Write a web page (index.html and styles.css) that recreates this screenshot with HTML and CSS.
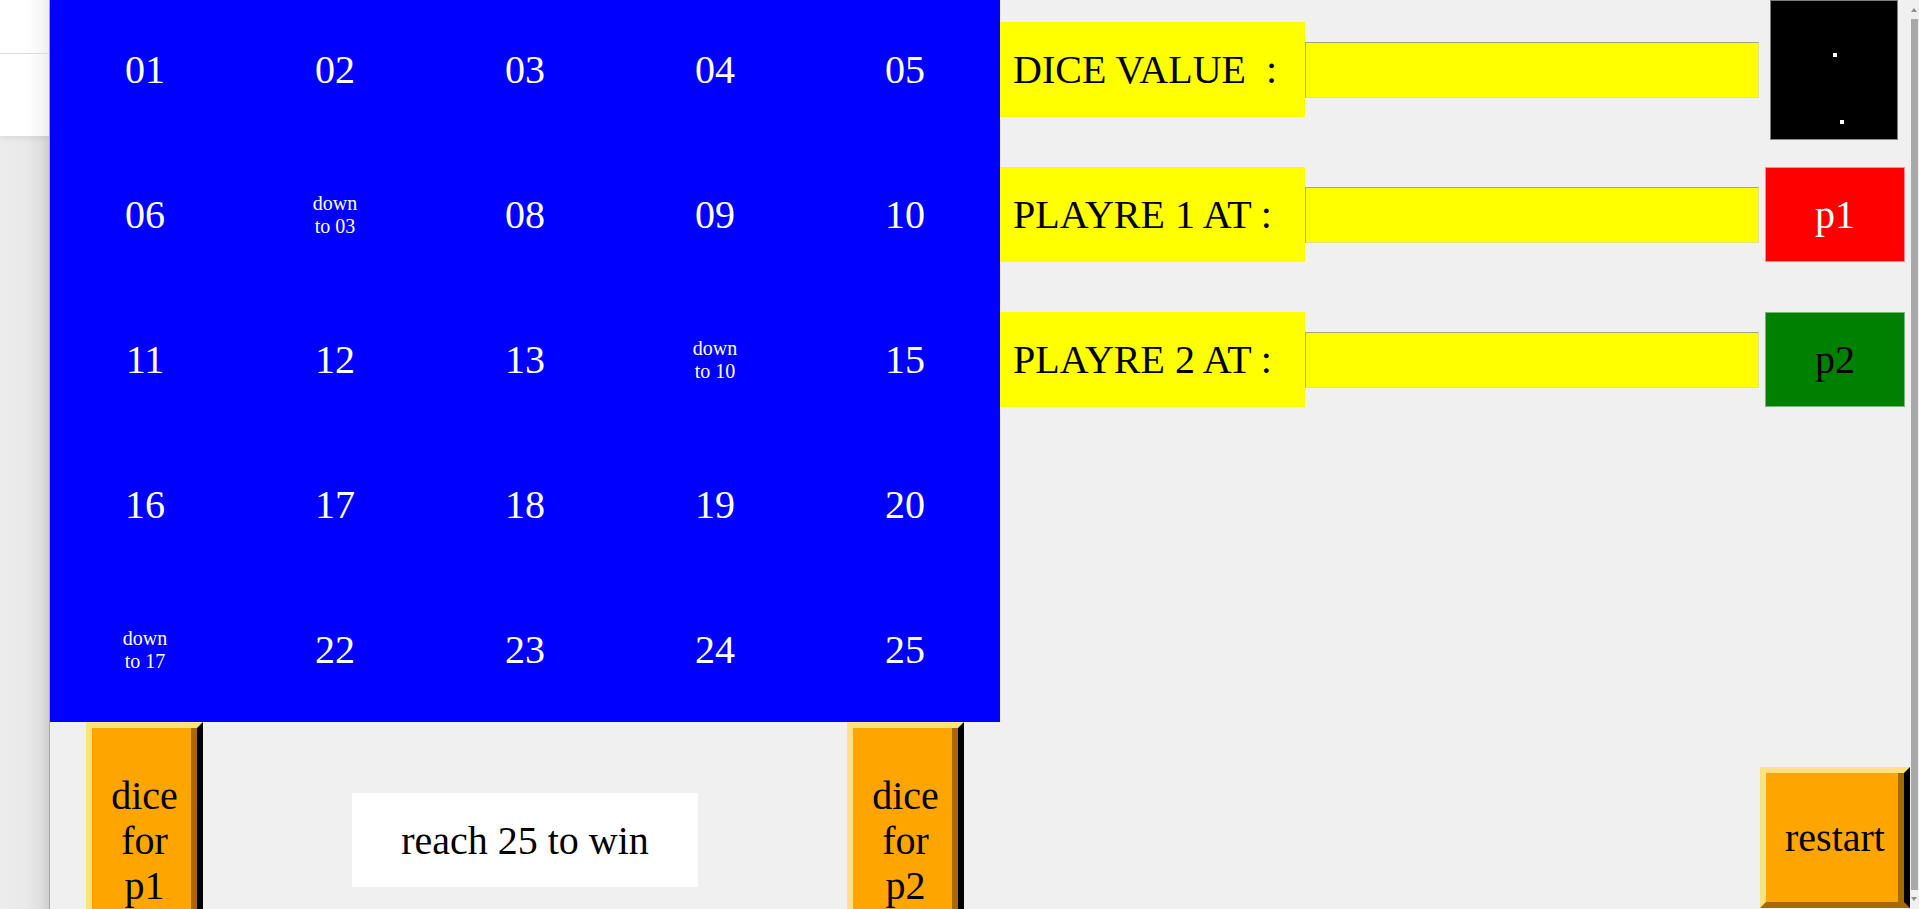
FILE: index.html
```html
<!DOCTYPE html>
<html lang="en">
<head>
<meta charset="utf-8">
<title>Snakes dice game</title>
<link rel="stylesheet" href="styles.css">
</head>
<body>
<div class="app">
  <div class="strip">
    <div class="strip-top"><div class="strip-line"></div></div>
  </div>
  <div class="page">
    <div class="top">
      <div class="board">
        <div class="cell">01</div><div class="cell">02</div><div class="cell">03</div><div class="cell">04</div><div class="cell">05</div>
        <div class="cell">06</div><div class="cell small">down<br>to 03</div><div class="cell">08</div><div class="cell">09</div><div class="cell">10</div>
        <div class="cell">11</div><div class="cell">12</div><div class="cell">13</div><div class="cell small">down<br>to 10</div><div class="cell">15</div>
        <div class="cell">16</div><div class="cell">17</div><div class="cell">18</div><div class="cell">19</div><div class="cell">20</div>
        <div class="cell small">down<br>to 17</div><div class="cell">22</div><div class="cell">23</div><div class="cell">24</div><div class="cell">25</div>
      </div>
      <div class="panel">
        <div class="label">DICE VALUE&nbsp; :</div>
        <input class="field" type="text">
        <div class="side">
          <div class="dice">
            <div class="pip pip1"></div>
            <div class="pip pip2"></div>
          </div>
        </div>
        <div class="label">PLAYRE 1 AT :</div>
        <input class="field" type="text">
        <div class="side"><div class="token token-p1">p1</div></div>
        <div class="label">PLAYRE 2 AT :</div>
        <input class="field" type="text">
        <div class="side"><div class="token token-p2">p2</div></div>
      </div>
    </div>
    <div class="bottom">
      <div class="bottom-left">
        <button class="btn btn-dice" type="button">dice for p1</button>
        <div class="goal">reach 25 to win</div>
        <button class="btn btn-dice" type="button">dice for p2</button>
      </div>
      <div class="bottom-right">
        <button class="btn btn-restart" type="button">restart</button>
      </div>
    </div>
  </div>
  <div class="scrollbar">
    <div class="arrow arrow-up"></div>
    <div class="thumb"></div>
    <div class="arrow arrow-down"></div>
  </div>
</div>
</body>
</html>
```

FILE: styles.css
```css
html, body {
  margin: 0;
  padding: 0;
  overflow: hidden;
  background: #f0f0f0;
}

body {
  font-family: "Liberation Serif", "Times New Roman", serif;
}

.app {
  display: flex;
  width: 1919px;
  height: 909px;
  overflow: hidden;
}

/* left host strip */
.strip {
  width: 49px;
  flex: none;
  border-right: 1px solid #a9a9a9;
  background: linear-gradient(to right, #ececec 0%, #e9e9e9 55%, #dddddd 85%, #cdcdcd 100%);
}

.strip-top {
  height: 136px;
  background: linear-gradient(to right, #ffffff 0%, #ffffff 55%, #f6f6f6 85%, #ececec 100%);
  box-shadow: 0 2px 6px rgba(0, 0, 0, 0.08);
}

.strip-line {
  height: 53px;
  border-bottom: 1px solid #dcdcdc;
}

/* page */
.page {
  width: 1860px;
  flex: none;
  overflow: hidden;
  background: #f0f0f0;
}

.top {
  display: flex;
  margin-top: -3px;
}

.board {
  width: 950px;
  flex: none;
  display: grid;
  grid-template-columns: repeat(5, 190px);
  grid-template-rows: repeat(5, 145px);
  background: #0000ff;
}

.cell {
  display: flex;
  align-items: center;
  justify-content: center;
  text-align: center;
  color: #ffffff;
  font-size: 40px;
}

.cell.small {
  font-size: 20px;
}

.panel {
  display: grid;
  grid-template-columns: 305px 454px 146px;
  grid-auto-rows: 145px;
  align-items: center;
}

.label {
  height: 95px;
  box-sizing: border-box;
  padding-left: 13px;
  display: flex;
  align-items: center;
  background: #ffff00;
  color: #000000;
  font-size: 40px;
  white-space: nowrap;
}

.field {
  display: block;
  width: 454px;
  height: 56px;
  box-sizing: border-box;
  margin: 0;
  padding: 0;
  background: #ffff00;
  border: 1px solid;
  border-color: #a3a38a #dede8a #e2e28c #a6a6a6;
  font-family: inherit;
  font-size: 40px;
}

.side {
  height: 100%;
  padding-left: 6px;
  display: flex;
  align-items: center;
}

.dice {
  align-self: flex-start;
  margin-top: 3px;
  margin-left: 5px;
  width: 128px;
  height: 140px;
  box-sizing: border-box;
  background: #000000;
  border: 1px solid #7d7d7d;
  border-bottom-color: #8a8a8a;
}

.pip {
  width: 4px;
  height: 4px;
  background: #ffffff;
}

.pip1 {
  margin: 52px 0 0 62px;
}

.pip2 {
  margin: 63px 0 0 69px;
}

.token {
  width: 140px;
  height: 95px;
  box-sizing: border-box;
  display: flex;
  align-items: center;
  justify-content: center;
  font-size: 40px;
}

.token-p1 {
  background: #ff0000;
  color: #ffffff;
  border: 1px solid #ff8c8c;
}

.token-p2 {
  background: #008000;
  color: #000000;
  border: 1px solid #76b676;
}

/* bottom */
.bottom {
  display: flex;
  align-items: flex-start;
}

.bottom-left {
  width: 950px;
  flex: none;
  display: flex;
  justify-content: center;
  align-items: flex-start;
  gap: 149px;
}

.bottom-right {
  flex: 1;
  display: flex;
  justify-content: flex-end;
  align-items: flex-start;
}

.btn {
  box-sizing: border-box;
  margin: 0;
  padding: 0 6px;
  background: #ffa500;
  color: #000000;
  font-family: "Liberation Serif", "Times New Roman", serif;
  font-size: 40px;
  line-height: normal;
  border-style: solid;
  border-width: 6px;
  border-color: #ffe27e #000000 #a56b00 #ffe27e;
  box-shadow: inset -6px 0 0 #a56b00;
  cursor: pointer;
}

.btn-dice {
  width: 117px;
  height: 242px;
  line-height: 45px;
  padding-bottom: 5px;
}

.goal {
  margin-top: 71px;
  width: 346px;
  height: 94px;
  box-sizing: border-box;
  display: flex;
  align-items: center;
  justify-content: center;
  background: #ffffff;
  color: #000000;
  font-size: 40px;
  white-space: nowrap;
}

.btn-restart {
  margin-top: 45px;
  width: 150px;
  height: 141px;
}

/* scrollbar */
.scrollbar {
  width: 9px;
  flex: none;
  background: #f0f0f0;
  position: relative;
}

.thumb {
  position: absolute;
  left: 1px;
  top: 19px;
  width: 7px;
  height: 871px;
  background: #a8a8a8;
}

.arrow {
  position: absolute;
  left: 1px;
  width: 0;
  height: 0;
  border-left: 3px solid transparent;
  border-right: 3px solid transparent;
}

.arrow-up {
  top: 8px;
  border-bottom: 4px solid #8c8c8c;
}

.arrow-down {
  top: 897px;
  border-top: 4px solid #8c8c8c;
}
```
